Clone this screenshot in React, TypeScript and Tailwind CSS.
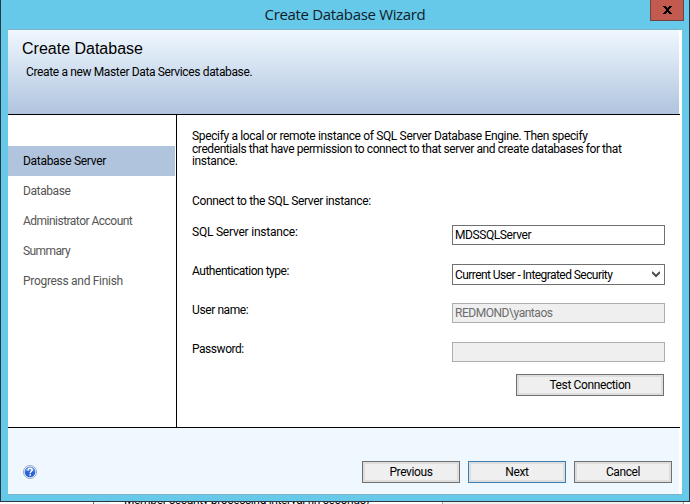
import { useState } from "react";

const steps = [
  { label: "Database Server", cls: "tracking-[-0.3px]" },
  { label: "Database", cls: "tracking-[-0.4px]" },
  { label: "Administrator Account", cls: "tracking-[-0.52px]" },
  { label: "Summary", cls: "tracking-[-0.6px]" },
  { label: "Progress and Finish", cls: "tracking-[-0.3px]" },
];

function WizardButton({ label, active = false, width = "w-[98px]" }: { label: string; active?: boolean; width?: string }) {
  return (
    <button
      className={`${width} h-[22px] border ${active ? "border-[#3c7fb1]" : "border-[#707070]"} bg-[#dddddd] p-[2px]`}
    >
      <span className="block h-4 bg-[#efefef] text-center leading-[17px] tracking-[-0.38px]">{label}</span>
    </button>
  );
}

function Row({ label, cls, children }: { label: string; cls: string; children: React.ReactNode }) {
  return (
    <div className="flex h-[39px] items-start justify-between">
      <label className={`leading-[15px] ${cls}`}>{label}</label>
      {children}
    </div>
  );
}

function HelpIcon() {
  return (
    <svg width="14" height="14" viewBox="0 0 14 14">
      <circle cx="7" cy="7" r="6.5" fill="#f4f7fc" stroke="#8f9fc0" strokeWidth="0.9" />
      <circle cx="7" cy="7" r="5.3" fill="#2a62d8" />
      <path d="M2.2 6.6a4.8 4.8 0 0 1 9.6-.2C9 5.4 5 5.6 2.2 6.6Z" fill="#5f8ff0" />
      <path d="M5 5.4C5 3.9 6 3.3 7.1 3.3c1.2 0 2.1.7 2.1 1.8C9.2 6.5 7.2 6.6 7.2 8.2" fill="none" stroke="#fff" strokeWidth="1.5" />
      <rect x="6.4" y="9.2" width="1.6" height="1.6" fill="#fff" />
    </svg>
  );
}

export default function App() {
  const [server, setServer] = useState("MDSSQLServer");
  return (
    <div className="flex h-[504px] w-[690px] flex-col overflow-hidden bg-white font-['Roboto','Liberation_Sans',sans-serif] text-[12px] text-black">
      <div className="flex h-[502px] shrink-0 flex-col border-x border-b border-[#2b3a42] bg-[#66c9e9] px-[7px] pb-[6px]">
        <header className="relative h-[29px] shrink-0 text-center font-['Open_Sans','Noto_Sans',sans-serif] text-[15px] leading-[29px] tracking-[-0.33px] text-[#10202a]">
          <h1>Create Database Wizard</h1>
          <button className="absolute -right-[2px] -top-px flex h-[22px] w-[34px] items-center justify-center border border-[#6d4440] bg-[#c35a50]">
            <svg width="9" height="8" viewBox="0 0 9 8" shapeRendering="crispEdges">
              <path d="M0 0h3v1h1v1h1V1h1V0h3v1H8v1H7v1H6v2h1v1h1v1h1v1H6V7H5V6H4v1H3v1H0V7h1V6h1V5h1V3H2V2H1V1H0Z" />
            </svg>
          </button>
        </header>

        <div className="flex grow flex-col border-y border-[#7fb2cb] bg-white">
          <section className="mr-[3px] h-[84px] bg-linear-to-b from-[#f0f8ff] to-[#b0c4de] pl-[14px] pt-[9px]">
            <h2 className="font-['Liberation_Sans',Arial,sans-serif] text-[16px] leading-5">Create Database</h2>
            <p className="pl-1 pt-[6px] leading-[15px] tracking-[-0.36px]">Create a new Master Data Services database.</p>
          </section>

          <div className="mr-[2px] flex h-[314px] border-y border-black">
            <nav className="w-[169px] border-r border-black pr-px pt-[31px] text-[#555555]">
              {steps.map((s, i) => (
                <div key={s.label} className={`h-[30px] pl-[15px] leading-[31px] ${s.cls} ${i === 0 ? "bg-[#b0c4de] text-black" : ""}`}>
                  {s.label}
                </div>
              ))}
            </nav>

            <main className="w-[488px] pl-[15px] pt-[14px]">
              <p className="h-[65px] whitespace-nowrap pt-px leading-[12.5px] tracking-[-0.35px]">
                Specify a local or remote instance of SQL Server Database Engine. Then specify
                <br />
                <span className="tracking-[-0.42px]">
                  credentials that have permission to connect to that server and create databases for that
                </span>
                <br />
                instance.
              </p>
              <p className="h-[31px] leading-[15px] tracking-[-0.35px]">Connect to the SQL Server instance:</p>
              <Row label="SQL Server instance:" cls="tracking-[-0.22px]">
                <input
                  value={server}
                  onChange={(e) => setServer(e.target.value)}
                  className="h-5 w-[213px] border border-[#707070] bg-white pl-[2px] leading-[18px] tracking-[-0.42px]"
                />
              </Row>
              <Row label="Authentication type:" cls="tracking-[-0.48px]">
                <div className="flex h-[21px] w-[213px] items-center justify-between border border-[#707070] pl-[2px] pr-1">
                  <span className="pt-px tracking-[-0.56px]">Current User - Integrated Security</span>
                  <svg width="8" height="7" viewBox="0 0 8 7">
                    <path d="M0 1 4 5 8 1" fill="none" stroke="#505050" strokeWidth="2" />
                  </svg>
                </div>
              </Row>
              <Row label="User name:" cls="tracking-[-0.4px]">
                <input
                  disabled
                  value="REDMOND\yantaos"
                  className="h-5 w-[213px] border border-[#abadb3] bg-[#efefef] pl-[2px] tracking-[-0.46px] text-[#6d6d6d]"
                />
              </Row>
              <Row label="Password:" cls="tracking-[-0.46px]">
                <input disabled className="h-5 w-[213px] border border-[#abadb3] bg-[#efefef]" />
              </Row>
              <div className="-mt-[7px] flex justify-end pr-px">
                <WizardButton label="Test Connection" width="w-[148px]" />
              </div>
            </main>
          </div>

          <footer className="mr-[3px] flex grow justify-between bg-[#f0f8ff] pl-[15px] pr-[7px]">
            <div className="pt-[37px]">
              <HelpIcon />
            </div>
            <div className="flex gap-2 pt-[33px]">
              <WizardButton label="Previous" />
              <WizardButton label="Next" active />
              <WizardButton label="Cancel" />
            </div>
          </footer>
        </div>
      </div>

      <div className="flex h-[2px] shrink-0 overflow-hidden pl-[93px]">
        <div className="w-[16px] border-l border-[#707070] bg-[#f0f8ff]" />
        <div className="w-[333px] pl-[15px]">
          <p className="-mt-[9px] whitespace-nowrap leading-[14px] tracking-[-0.36px]">Member security processing interval (in seconds)</p>
        </div>
        <div className="w-[242px] border-x border-[#a0a0a0] bg-[#f0f0f0]" />
      </div>
    </div>
  );
}
